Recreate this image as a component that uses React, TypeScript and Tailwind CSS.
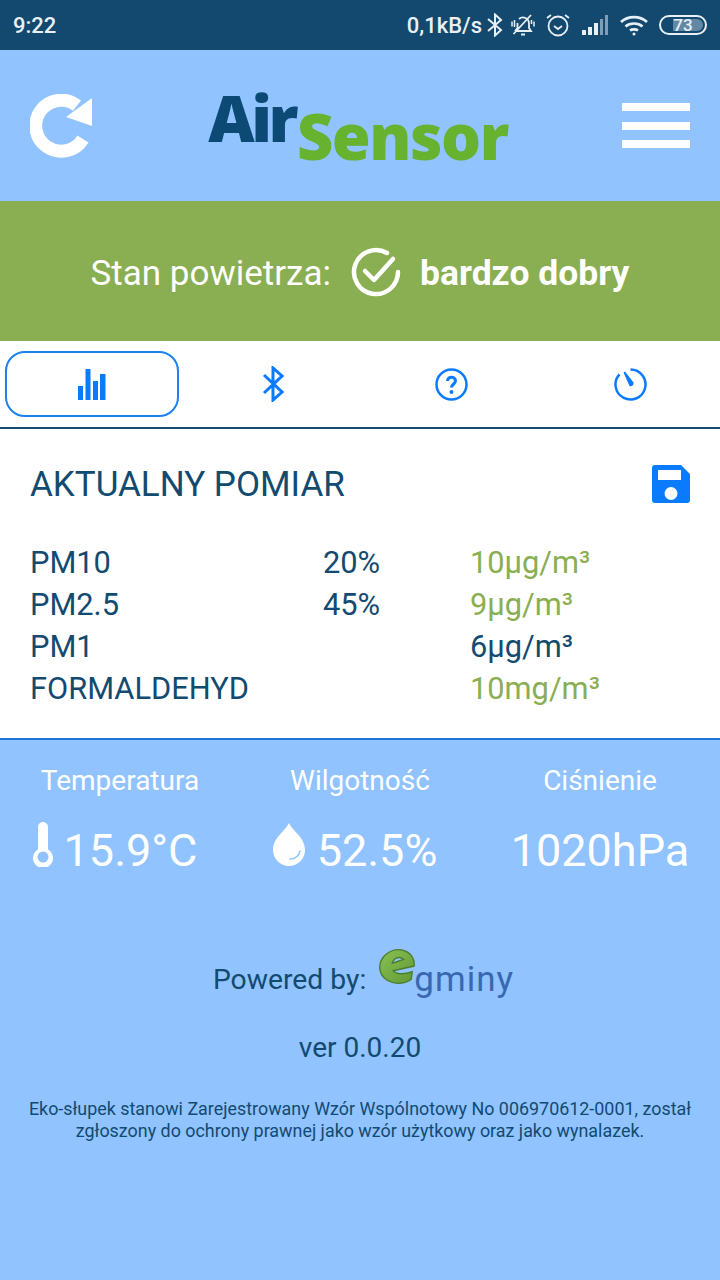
const rows = [
  { name: 'PM10', pct: '20%', value: '10µg/m³', good: true },
  { name: 'PM2.5', pct: '45%', value: '9µg/m³', good: true },
  { name: 'PM1', pct: '', value: '6µg/m³', good: false },
  { name: 'FORMALDEHYD', pct: '', value: '10mg/m³', good: true },
];

function StatusBar() {
  return (
    <div className="flex h-[50px] items-center justify-between bg-[#13486f] pl-[13px] pr-[13px] text-[#e9f0f5]">
      <span className="text-[22px] font-medium">9:22</span>
      <div className="flex items-center">
        <span className="text-[22px] font-medium">0,1kB/s</span>
        <svg width="16" height="24" viewBox="0 0 16 24" fill="none" stroke="currentColor" strokeWidth="2" className="ml-[5px]">
          <path d="M1 6l13 11-6 5.500V1.500l6 5.500L1 18" />
        </svg>
        <svg width="26" height="24" viewBox="0 0 26 24" fill="none" stroke="currentColor" strokeWidth="1.800" className="ml-[7px]">
          <path d="M5 18h16l-2-3v-4.500a6 6 0 0 0-10-4.500M7.500 10v5l-2.500 3M11 21.500h4M3.500 21 21 2" />
          <path d="M2 8.500v5M4.500 7v7M24 8.500v5M21.500 7v4" strokeWidth="1.500" />
        </svg>
        <svg width="24" height="26" viewBox="0 0 24 26" fill="none" stroke="currentColor" strokeWidth="1.800" className="ml-[10px]">
          <circle cx="12" cy="14" r="9.500" />
          <path d="M8 14l4 3 4-3M1 6l4-3M23 6l-4-3" />
        </svg>
        <svg width="28" height="22" viewBox="0 0 28 22" className="ml-[11px]">
          <rect x="1" y="16" width="4" height="5" fill="#e9f0f5" />
          <rect x="7" y="13" width="4" height="8" fill="#e9f0f5" />
          <rect x="13" y="9" width="4" height="12" fill="#e9f0f5" />
          <rect x="19" y="5" width="3" height="16" fill="#7f9db4" />
          <rect x="24" y="1" width="3" height="20" fill="#7f9db4" />
        </svg>
        <svg width="30" height="22" viewBox="0 0 30 22" fill="none" stroke="currentColor" strokeWidth="2.600" className="ml-[10px]">
          <path d="M2 8c7-6.500 19-6.500 26 0M6.500 12.500c4.500-4 12.500-4 17 0M11 16.500c2-1.500 6-1.500 8 0" />
          <circle cx="15" cy="20" r="1.500" fill="currentColor" stroke="none" />
        </svg>
        <div className="relative ml-[10px] flex h-[20px] w-[48px] items-center justify-center overflow-hidden rounded-full border-2 border-[#e9f0f5]">
          <div className="absolute bottom-[2px] left-[12px] top-[2px] w-[30px] rounded-r-full bg-[#6288a5]" />
          <span className="relative text-[17px] font-medium leading-none">73</span>
        </div>
      </div>
    </div>
  );
}

function Header() {
  return (
    <div className="flex h-[151px] items-center justify-between bg-[#90c3ff] pl-[30px] pr-[30px]">
      <svg width="64" height="64" viewBox="0 0 64 64" fill="none">
        <path d="M47 11.700A25.500 25.500 0 1 0 53 45" stroke="#fff" strokeWidth="13" />
        <path d="M62 4v28L36 23z" fill="#fff" />
      </svg>
      <div className="mb-[16px] flex items-baseline font-['Open_Sans',sans-serif] font-extrabold leading-none">
        <span className="text-[64px] tracking-[-3.500px] text-[#0c4a75]">Air</span>
        <span className="ml-[2px] translate-y-[18px] text-[63px] tracking-[-1.500px] text-[#67b22f]">Sensor</span>
      </div>
      <div className="flex w-[68px] flex-col gap-[10.500px]">
        <div className="h-[8px] bg-white" />
        <div className="h-[8px] bg-white" />
        <div className="h-[8px] bg-white" />
      </div>
    </div>
  );
}

function AirState() {
  return (
    <div className="flex h-[140px] items-center justify-center bg-[#8aae52] pt-[6px] text-white">
      <span className="text-[35px]">Stan powietrza:</span>
      <svg width="52" height="52" viewBox="0 0 52 52" fill="none" stroke="#fff" strokeWidth="4.500" strokeLinecap="round" strokeLinejoin="round" className="ml-[19px] mt-[-4px]">
        <path d="M48 26a22 22 0 1 1-11-19" />
        <path d="M15 25l9 9 19-21" />
      </svg>
      <span className="ml-[18px] text-[35.500px] font-bold">bardzo dobry</span>
    </div>
  );
}

function Tabs() {
  return (
    <div className="grid h-[88px] grid-cols-4 border-b-2 border-[#1a4a6e] bg-white pb-[10px] pl-[5px] pt-[10px] text-[#0a7aff]">
      <div className="flex h-[66px] w-[174px] items-center justify-center rounded-[20px] border-2 border-[#1c82ee]">
        <svg width="28" height="32" viewBox="0 0 28 32" fill="currentColor">
          <rect x="0" y="18" width="5" height="14" />
          <rect x="7.500" y="1" width="5" height="31" />
          <rect x="15" y="13" width="5" height="19" />
          <rect x="22" y="6" width="5.500" height="26" />
        </svg>
      </div>
      <div className="flex items-center justify-center">
        <svg width="22" height="36" viewBox="0 0 22 36" fill="none" stroke="currentColor" strokeWidth="3">
          <path d="M2 9l18 17-9 8V2l9 8L2 27" />
        </svg>
      </div>
      <div className="flex items-center justify-center">
        <svg width="33" height="33" viewBox="0 0 33 33" fill="none" stroke="currentColor" strokeWidth="2.500">
          <circle cx="16.500" cy="16.500" r="15" />
          <path d="M12.500 13c0-5 8-5 8 0 0 3-4 3-4 6.500" strokeWidth="3" />
          <circle cx="16.500" cy="24" r="2" fill="currentColor" stroke="none" />
        </svg>
      </div>
      <div className="flex items-center justify-center">
        <svg width="33" height="33" viewBox="0 0 33 33" fill="none" stroke="currentColor" strokeWidth="2.500">
          <path d="M16.500 1.500a15 15 0 1 1-11 4.800" />
          <path d="M9.500 4.500l1.500-1 8.500 11a3 3 0 0 1-4 3.500z" fill="currentColor" stroke="none" />
        </svg>
      </div>
    </div>
  );
}

function Measurements() {
  return (
    <div className="h-[311px] border-b-2 border-[#1c76d8] bg-white pl-[30px] pr-[30px] text-[#134a70]">
      <div className="flex items-center justify-between pt-[36px]">
        <h2 className="text-[35px] leading-[40px]">AKTUALNY POMIAR</h2>
        <svg width="38" height="38" viewBox="0 0 38 38" fill="#0a7aff" className="mt-[-2px]">
          <path fillRule="evenodd" d="M3 0h26l9 9v26a3 3 0 0 1-3 3H3a3 3 0 0 1-3-3V3a3 3 0 0 1 3-3zm3 5v10h23V5zm13 17a6.500 6.500 0 1 0 0 13 6.500 6.500 0 0 0 0-13z" />
        </svg>
      </div>
      <div className="mt-[37px] text-[30.800px] leading-[42px]">
        {rows.map((row) => (
          <div key={row.name} className="flex">
            <span className="w-[293px]">{row.name}</span>
            <span className="w-[147px]">{row.pct}</span>
            <span className={row.good ? 'text-[#8aae52]' : ''}>{row.value}</span>
          </div>
        ))}
      </div>
    </div>
  );
}

function Readings() {
  return (
    <div className="grid grid-cols-3 pt-[23px] text-center text-white">
      <div>
        <div className="text-[28px] leading-[36px]">Temperatura</div>
        <div className="mt-[25px] flex items-center justify-center pr-[10px] text-[45px] leading-[54px]">
          <svg width="20" height="45" viewBox="0 0 20 45" className="mr-[11px] mt-[-13px]">
            <path fillRule="evenodd" d="M5 5a5 5 0 0 1 10 0v22.500a10 10 0 1 1-10 0zM10 29.500a5.500 5.500 0 1 0 0 11 5.500 5.500 0 0 0 0-11z" fill="#fff" />
          </svg>
          <span>15.9°C</span>
        </div>
      </div>
      <div>
        <div className="text-[28px] leading-[36px]">Wilgotność</div>
        <div className="mt-[25px] flex items-center justify-center pr-[10px] text-[45px] leading-[54px]">
          <svg width="32" height="43" viewBox="0 0 32 43" className="mr-[12px] mt-[-13px]">
            <path d="M16 0c4 8 16 15 16 27a16 16 0 0 1-32 0C0 15 12 8 16 0z" fill="#fff" />
            <path d="M17 36c5 0 9-3 10-8" fill="none" stroke="#90c3ff" strokeWidth="1.500" strokeLinecap="round" />
          </svg>
          <span>52.5%</span>
        </div>
      </div>
      <div>
        <div className="text-[28px] leading-[36px]">Ciśnienie</div>
        <div className="mt-[25px] text-[45px] leading-[54px]">1020hPa</div>
      </div>
    </div>
  );
}

function Footer() {
  return (
    <div className="text-center text-[#134a70]">
      <div className="mt-[72px] flex h-[60px] items-center justify-center pl-[7px]">
        <span className="text-[28.300px]">Powered by:</span>
        <div className="ml-[13px] flex items-start">
          <svg width="36" height="38" viewBox="0 0 38 38" className="mt-[-10px]">
            <defs>
              <linearGradient id="eFace" x1="0" y1="0" x2="1" y2="1">
                <stop offset="0" stopColor="#8cc152" />
                <stop offset="1" stopColor="#5f9a35" />
              </linearGradient>
            </defs>
            <path
              fillRule="evenodd"
              d="M1 22C-1 8 13-1 24 1c10 2 14 10 13 17L15 23c3 4 12 4 20 1l-1 8C22 40 4 36 1 22zM14 15l12-4c-3-3-10-3-12 4z"
              fill="url(#eFace)"
              stroke="#4c7f2e"
              strokeWidth="1.500"
            />
          </svg>
          <span className="ml-[-1px] text-[35px] leading-[44px] tracking-[1px] text-[#3868b0]">gminy</span>
        </div>
      </div>
      <div className="mt-[20px] text-[28px] leading-[36px]">ver 0.0.20</div>
      <p className="mt-[32px] text-[17.900px] leading-[22px]">
        Eko-słupek stanowi Zarejestrowany Wzór Wspólnotowy No 006970612-0001, został
        <br />
        zgłoszony do ochrony prawnej jako wzór użytkowy oraz jako wynalazek.
      </p>
    </div>
  );
}

export default function App() {
  return (
    <div className="h-[1280px] w-[720px] overflow-hidden bg-[#90c3ff] font-['Roboto',sans-serif]">
      <StatusBar />
      <Header />
      <AirState />
      <Tabs />
      <Measurements />
      <Readings />
      <Footer />
    </div>
  );
}
